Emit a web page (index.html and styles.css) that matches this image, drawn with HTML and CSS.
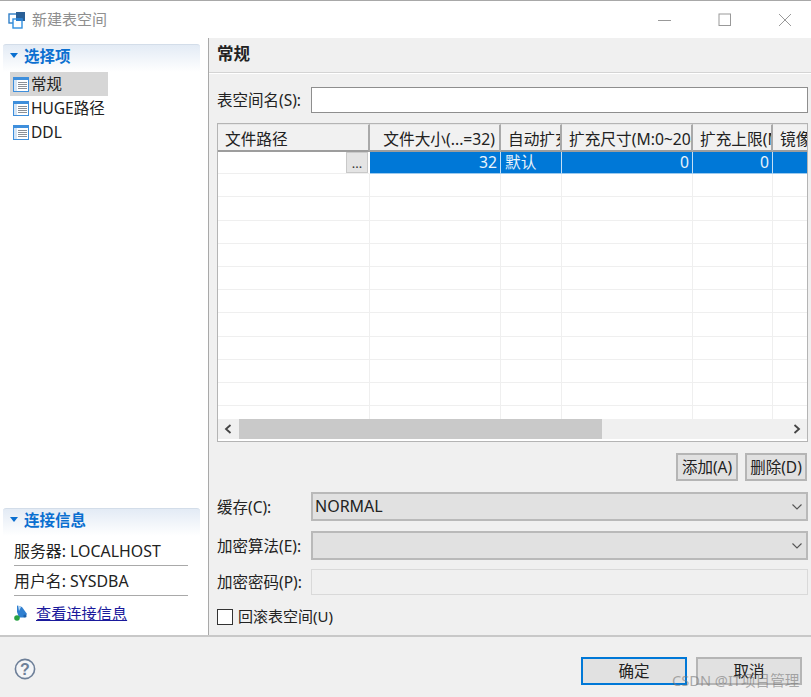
FILE: index.html
```html
<!DOCTYPE html>
<html lang="zh">
<head>
<meta charset="utf-8">
<title>新建表空间</title>
<link rel="stylesheet" href="styles.css">
</head>
<body>
<svg class="defs" width="0" height="0">
  <symbol id="page" viewBox="0 0 16 15">
    <rect x="0.5" y="0.5" width="15" height="14" fill="#fff" stroke="#3f8fdc"/>
    <rect x="1" y="1" width="14" height="2" fill="#3f8fdc"/>
    <rect x="1" y="3" width="3" height="11" fill="#d5e5f5"/>
    <path d="M5 5.5h9M5 7.5h9M5 9.5h9M5 11.5h9" stroke="#8a8f96" stroke-width="1"/>
  </symbol>
  <symbol id="chev" viewBox="0 0 12 8">
    <path d="M1.5 1.5 6 6l4.5-4.5" fill="none" stroke="#555" stroke-width="1.1"/>
  </symbol>
  <symbol id="tri" viewBox="0 0 8 5">
    <path d="M0 0h8L4 5z" fill="#0a6fd0"/>
  </symbol>
</svg>
<div class="dialog">
  <header class="titlebar">
    <div class="title-left">
      <svg class="app-icon" width="18" height="18" viewBox="0 0 18 18">
        <rect x="1" y="3" width="9" height="9" fill="#fff" stroke="#2f7fc8" stroke-width="1.4"/>
        <rect x="8" y="1" width="9" height="9" fill="#2a5f96"/>
        <rect x="5" y="8" width="9" height="9" fill="#fff" stroke="#2f8fe0" stroke-width="1.4"/>
        <rect x="8" y="7" width="6" height="3" fill="#2a7fd0"/>
      </svg>
      <span class="title-text">新建表空间</span>
    </div>
    <div class="win-controls">
      <svg width="14" height="14" viewBox="0 0 14 14"><path d="M0 7.5h13" stroke="#999" stroke-width="1"/></svg>
      <svg width="14" height="14" viewBox="0 0 14 14"><rect x="1" y="1" width="11.5" height="11.5" fill="none" stroke="#999" stroke-width="1"/></svg>
      <svg width="14" height="14" viewBox="0 0 14 14"><path d="M1 1l12 12M13 1 1 13" stroke="#999" stroke-width="1"/></svg>
    </div>
  </header>

  <div class="content">
    <aside class="sidebar">
      <section class="side-top">
        <h2 class="side-head"><svg class="tri" width="8" height="5"><use href="#tri"/></svg>选择项</h2>
        <ul class="nav">
          <li class="nav-item is-selected"><svg width="16" height="15"><use href="#page"/></svg><span>常规</span></li>
          <li class="nav-item"><svg width="16" height="15"><use href="#page"/></svg><span>HUGE路径</span></li>
          <li class="nav-item"><svg width="16" height="15"><use href="#page"/></svg><span>DDL</span></li>
        </ul>
      </section>
      <section class="side-bottom">
        <h2 class="side-head"><svg class="tri" width="8" height="5"><use href="#tri"/></svg>连接信息</h2>
        <div class="info-row">服务器: LOCALHOST</div>
        <div class="info-row">用户名: SYSDBA</div>
        <div class="info-link">
          <svg width="16" height="18" viewBox="0 0 16 18">
            <path d="M3 1.5 8 3l5 7-2.5 3.5H5L3 8z" fill="#2f7fd0"/>
            <path d="M4 1.5 7 3 5 7z" fill="#bcd8f2"/>
            <circle cx="3" cy="14" r="2.8" fill="#27a243"/>
            <circle cx="11" cy="12" r="1.6" fill="#1c5fa8"/>
          </svg>
          <a href="#">查看连接信息</a>
        </div>
      </section>
    </aside>

    <main class="panel">
      <h1 class="panel-head">常规</h1>
      <div class="panel-body">
        <div class="field name-field">
          <label class="lbl">表空间名(S):</label>
          <div class="input"></div>
        </div>

        <div class="grid-box">
          <div class="grid-scroll">
            <table class="grid">
              <colgroup>
                <col class="c1"><col class="c2"><col class="c3"><col class="c4"><col class="c5"><col>
              </colgroup>
              <thead>
                <tr>
                  <th>文件路径</th>
                  <th class="th-right">文件大小(...=32)</th>
                  <th>自动扩充</th>
                  <th>扩充尺寸(M:0~2048)</th>
                  <th>扩充上限(M)</th>
                  <th>镜像</th>
                </tr>
              </thead>
              <tbody>
                <tr class="row-selected">
                  <td class="path-cell"><span class="dots">...</span></td>
                  <td class="num">32</td>
                  <td>默认</td>
                  <td class="num">0</td>
                  <td class="num">0</td>
                  <td></td>
                </tr>
                <tr><td></td><td></td><td></td><td></td><td></td><td></td></tr>
                <tr><td></td><td></td><td></td><td></td><td></td><td></td></tr>
                <tr><td></td><td></td><td></td><td></td><td></td><td></td></tr>
                <tr><td></td><td></td><td></td><td></td><td></td><td></td></tr>
                <tr><td></td><td></td><td></td><td></td><td></td><td></td></tr>
                <tr><td></td><td></td><td></td><td></td><td></td><td></td></tr>
                <tr><td></td><td></td><td></td><td></td><td></td><td></td></tr>
                <tr><td></td><td></td><td></td><td></td><td></td><td></td></tr>
                <tr><td></td><td></td><td></td><td></td><td></td><td></td></tr>
                <tr><td></td><td></td><td></td><td></td><td></td><td></td></tr>
                <tr><td></td><td></td><td></td><td></td><td></td><td></td></tr>
              </tbody>
            </table>
          </div>
          <div class="hscroll">
            <svg class="arrow" width="8" height="10" viewBox="0 0 8 10"><path d="M6.5 1 2 5l4.5 4" fill="none" stroke="#444" stroke-width="1.8"/></svg>
            <div class="track"><div class="thumb"></div></div>
            <svg class="arrow" width="8" height="10" viewBox="0 0 8 10"><path d="M1.5 1 6 5 1.5 9" fill="none" stroke="#444" stroke-width="1.8"/></svg>
          </div>
        </div>

        <div class="grid-actions">
          <button class="btn small">添加(A)</button>
          <button class="btn small">删除(D)</button>
        </div>

        <div class="field sel-field">
          <label class="lbl">缓存(C):</label>
          <div class="select"><span>NORMAL</span><svg width="12" height="8"><use href="#chev"/></svg></div>
        </div>
        <div class="field sel-field">
          <label class="lbl">加密算法(E):</label>
          <div class="select"><span></span><svg width="12" height="8"><use href="#chev"/></svg></div>
        </div>
        <div class="field pw-field">
          <label class="lbl">加密密码(P):</label>
          <div class="input disabled"></div>
        </div>
        <div class="check-row">
          <span class="check"></span>
          <span class="lbl check-lbl">回滚表空间(U)</span>
        </div>
      </div>
    </main>
  </div>

  <footer class="footer">
    <svg class="help" width="22" height="22" viewBox="0 0 22 22">
      <circle cx="11" cy="11" r="9.6" fill="#f4f5f7" stroke="#6d7f98" stroke-width="1.6"/>
      <text x="11" y="16.5" text-anchor="middle" class="help-q">?</text>
    </svg>
    <div class="footer-actions">
      <button class="btn wide primary">确定</button>
      <button class="btn wide">取消</button>
    </div>
  </footer>
  <div class="watermark">CSDN @IT项目管理</div>
</div>
</body>
</html>
```
FILE: styles.css
```css
* { box-sizing: border-box; }
html, body { margin: 0; padding: 0; background: #f0f0f0; }
body {
  width: 811px;
  height: 697px;
  overflow: hidden;
  font-family: "Noto Sans", "Noto Sans CJK SC", sans-serif;
  font-size: 15.5px;
  color: #222;
}
.defs { position: absolute; }
.dialog { position: relative; width: 811px; height: 697px; display: flex; flex-direction: column; }

.titlebar {
  height: 38px;
  flex: none;
  background: #fff;
  border-top: 1px solid #a8a8a8;
  display: flex;
  align-items: center;
  justify-content: space-between;
  padding: 0 19px 0 8px;
}
.title-left { display: flex; align-items: center; gap: 6px; }
.title-text { color: #8f8f8f; font-size: 15px; padding-bottom: 2px; }
.win-controls { display: flex; gap: 46px; align-items: center; }

.content { flex: 1; min-height: 0; display: flex; }
.sidebar {
  width: 209px;
  flex: none;
  background: #fff;
  border-right: 1px solid #a9a9a9;
  display: flex;
  flex-direction: column;
  justify-content: space-between;
  padding-top: 6px;
}
.side-head {
  margin: 0 8px 0 3px;
  height: 28px;
  display: flex;
  align-items: center;
  gap: 6px;
  padding: 0 0 6px 7px;
  font-size: 15.5px;
  font-weight: 700;
  color: #0a6fd0;
  background: linear-gradient(#e3ebf5, #fff);
  border-radius: 3px 3px 0 0;
  border-top: 1px solid #d3dde9;
}
.nav { list-style: none; margin: 0; padding: 0 0 0 10px; }
.nav-item {
  width: 98px;
  height: 24px;
  display: flex;
  align-items: center;
  gap: 2px;
  padding-left: 3px;
  white-space: nowrap;
}
.nav-item span { padding-bottom: 1px; }
.nav-item.is-selected { background: #d6d6d6; }

.side-bottom { padding-bottom: 5px; }
.info-row {
  margin: 0 20px 0 14px;
  height: 30px;
  border-bottom: 1px solid #a9a9a9;
  display: flex;
  align-items: center;
  padding-bottom: 1px;
  font-size: 15.9px;
}
.info-link { margin-left: 14px; height: 34px; display: flex; align-items: center; gap: 6px; font-size: 15.2px; }
.info-link a { color: #1a1a9c; padding-bottom: 2px; }

.panel { flex: 1; min-width: 0; display: flex; flex-direction: column; background: #f0f0f0; }
.panel-head {
  margin: 0;
  height: 36px;
  flex: none;
  padding: 4px 0 0 8px;
  font-size: 16.5px;
  font-weight: 700;
  line-height: 24px;
  border-bottom: 1px solid #fff;
  box-shadow: inset 0 -1px 0 #d4d4d4;
}
.panel-body { padding: 13px 3px 0 8px; flex: 1; display: flex; flex-direction: column; }

.field { display: flex; align-items: center; }
.lbl { font-size: 15.5px; white-space: nowrap; padding-bottom: 2px; }
.field .lbl { width: 94px; flex: none; }
.sel-field .lbl { padding-bottom: 1px; }
.check-lbl { font-size: 15px; }
.input { flex: 1; height: 26px; background: #fff; border: 1px solid #8e8e8e; }
.input.disabled { background: #f0f0f0; border-color: #d9d9d9; }

.grid-box {
  margin-top: 10px;
  height: 319px;
  border: 1px solid #b4b4b4;
  background: #fff;
  display: flex;
  flex-direction: column;
  padding-bottom: 2px;
}
.grid-scroll { flex: 1; min-height: 0; overflow: hidden; }
.grid { width: 100%; border-collapse: separate; border-spacing: 0; table-layout: fixed; font-size: 15.7px; }
.c1 { width: 152px; } .c2 { width: 131px; } .c3 { width: 61px; } .c4 { width: 131px; } .c5 { width: 80px; }
.grid th {
  height: 27px;
  padding: 2px 0 0 7px;
  font-weight: 400;
  text-align: left;
  white-space: nowrap;
  overflow: hidden;
  background: #f1f1f1;
  border-top: 1px solid #e6e6e6;
  border-right: 2px solid #a9a9a9;
  border-bottom: 2px solid #9d9d9d;
}
.grid th:last-child { border-right: 0; }
.grid th.th-right { text-align: right; padding-right: 4px; }
.grid td {
  height: 23.2px;
  padding: 0 3px 1px 4px;
  line-height: 20px;
  background: #fff;
  border-right: 1px solid #efefef;
  border-bottom: 1px solid #efefef;
  white-space: nowrap;
  overflow: hidden;
}
.grid td:last-child { border-right: 0; }
.grid td.num { text-align: right; }
.row-selected td { height: 22.2px; background: #0078d7; color: #e9f3fb; border-right-color: #c5dff5; border-bottom-color: #9ccaee; }
.row-selected td.path-cell { background: #fff; padding: 0 1px 0 0; text-align: right; border-right: 1px solid #fff; border-bottom-color: #efefef; vertical-align: top; }
.dots {
  display: block;
  margin-left: auto;
  width: 22px;
  height: 21px;
  line-height: 21px;
  text-align: center;
  color: #333;
  background: #e4e4e4;
  border: 1px solid #c9c9c9;
  font-size: 13px;
}

.hscroll { height: 20px; flex: none; background: #f0f0f0; display: flex; align-items: center; }
.arrow { flex: none; margin: 0 6px; }
.track { flex: 1; height: 100%; margin-left: 1px; }
.thumb { width: 363px; height: 100%; background: #c9c9c9; }

.grid-actions { margin-top: 11px; padding-right: 1px; display: flex; justify-content: flex-end; gap: 7px; }
.btn {
  font-family: inherit;
  font-size: 15.5px;
  color: #222;
  background: #e1e1e1;
  border: 2px solid #b5b5b5;
  padding: 0 0 2px;
}
.btn.small { height: 28px; width: 62px; }
.btn.wide { height: 28px; width: 106px; }
.btn.primary { border-color: #0078d7; }

.sel-field { margin-top: 11px; }
.select {
  flex: 1;
  height: 29px;
  background: #e1e1e1;
  border: 2px solid #b9b9b9;
  display: flex;
  align-items: center;
  justify-content: space-between;
  padding: 0 3px 0 2px;
  font-size: 16px;
}
.select span { padding-bottom: 1px; }
.sel-field + .sel-field { margin-top: 10px; }
.pw-field { margin-top: 9px; }
.pw-field .input { height: 26px; }
.check-row { margin-top: 10px; display: flex; align-items: center; gap: 5px; }
.check { width: 16px; height: 16px; background: #fff; border: 1px solid #333; }

.footer {
  height: 62px;
  flex: none;
  border-top: 2px solid #c8c8c8;
  display: flex;
  align-items: center;
  justify-content: space-between;
  padding: 0 9px 0 14px;
}
.help { margin-top: 3px; }
.footer-actions { display: flex; gap: 9px; margin-top: 8px; }
.help-q { font-family: "Liberation Sans", sans-serif; font-size: 16px; font-weight: 700; fill: #6d7f98; }

.watermark {
  position: absolute;
  left: 672px;
  top: 669px;
  font-size: 14.6px;
  color: rgba(120, 120, 120, 0.6);
  white-space: nowrap;
}
```
